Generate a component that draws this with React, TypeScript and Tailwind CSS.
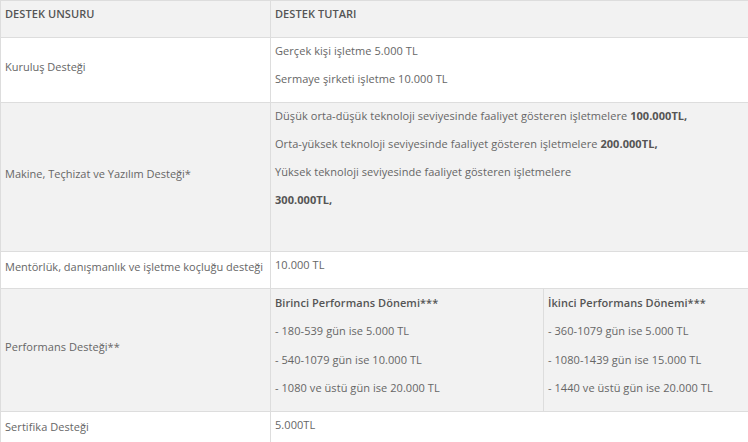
const rows = [
  {
    label: 'Kuruluş Desteği',
    lines: [<>Gerçek kişi işletme 5.000 TL</>, <>Sermaye şirketi işletme 10.000 TL</>],
  },
  {
    label: 'Makine, Teçhizat ve Yazılım Desteği*',
    lines: [
      <>Düşük orta-düşük teknoloji seviyesinde faaliyet gösteren işletmelere <b className="font-bold text-[#555]">100.000TL,</b></>,
      <>Orta-yüksek teknoloji seviyesinde faaliyet gösteren işletmelere <b className="font-bold text-[#555]">200.000TL,</b></>,
      <>Yüksek teknoloji seviyesinde faaliyet gösteren işletmelere</>,
      <b className="font-bold text-[#555]">300.000TL,</b>,
      <>&nbsp;</>,
    ],
  },
  {
    label: 'Mentörlük, danışmanlık ve işletme koçluğu desteği',
    lines: [<>10.000 TL</>],
  },
]

const perf = [
  {
    title: 'Birinci Performans Dönemi***',
    items: ['- 180-539 gün ise 5.000 TL', '- 540-1079 gün ise 10.000 TL', '- 1080 ve üstü gün ise 20.000 TL'],
  },
  {
    title: 'İkinci Performans Dönemi***',
    items: ['- 360-1079 gün ise 5.000 TL', '- 1080-1439 gün ise 15.000 TL', '- 1440 ve üstü gün ise 20.000 TL'],
  },
]

export default function App() {
  return (
    <div className="w-[748px] h-[442px] overflow-hidden bg-white font-['Open_Sans',sans-serif] text-[11px] leading-[18px] tracking-[0.06px] text-[#666]">
      <table className="w-[749px] table-fixed border-collapse">
        <colgroup>
          <col className="w-[270px]" />
          <col />
        </colgroup>
        <thead>
          <tr className="bg-[#f2f2f2]">
            <th className="border border-[#ddd] px-1 pt-[4px] pb-[14px] text-left align-top font-semibold text-[#555]">DESTEK UNSURU</th>
            <th className="border border-[#ddd] px-1 pt-[4px] pb-[14px] text-left align-top font-semibold text-[#555]">DESTEK TUTARI</th>
          </tr>
        </thead>
        <tbody>
          {rows.map((r, i) => (
            <tr key={i} className={i % 2 === 1 ? 'bg-[#f2f2f2]' : 'bg-white'}>
              <td className="border border-[#ddd] px-1 pb-[6px] align-middle whitespace-nowrap tracking-normal">{r.label}</td>
              <td className="border border-[#ddd] p-1 align-top">
                {r.lines.map((l, j) => (
                  <p key={j} className="mb-[10px]">{l}</p>
                ))}
              </td>
            </tr>
          ))}
          <tr className="bg-[#f2f2f2]">
            <td className="border border-[#ddd] px-1 pb-[6px] align-middle">Performans Desteği**</td>
            <td className="border border-[#ddd] p-0 align-top">
              <div className="grid grid-cols-[273px_1fr]">
                {perf.map((p, i) => (
                  <div key={i} className={i === 0 ? 'border-r border-[#ddd] px-1 pt-[5px] pb-[4px]' : 'px-1 pt-[5px] pb-[4px]'}>
                    <p className="mb-[10.3px] font-semibold text-[#555]">{p.title}</p>
                    {p.items.map((it) => (
                      <p key={it} className="mb-[10.3px]">{it}</p>
                    ))}
                  </div>
                ))}
              </div>
            </td>
          </tr>
          <tr className="bg-white">
            <td className="border border-[#ddd] px-1 pb-[6px] align-middle">Sertifika Desteği</td>
            <td className="border border-[#ddd] p-1 align-top">
              <p className="mb-[10px]">5.000TL</p>
            </td>
          </tr>
        </tbody>
      </table>
    </div>
  )
}
